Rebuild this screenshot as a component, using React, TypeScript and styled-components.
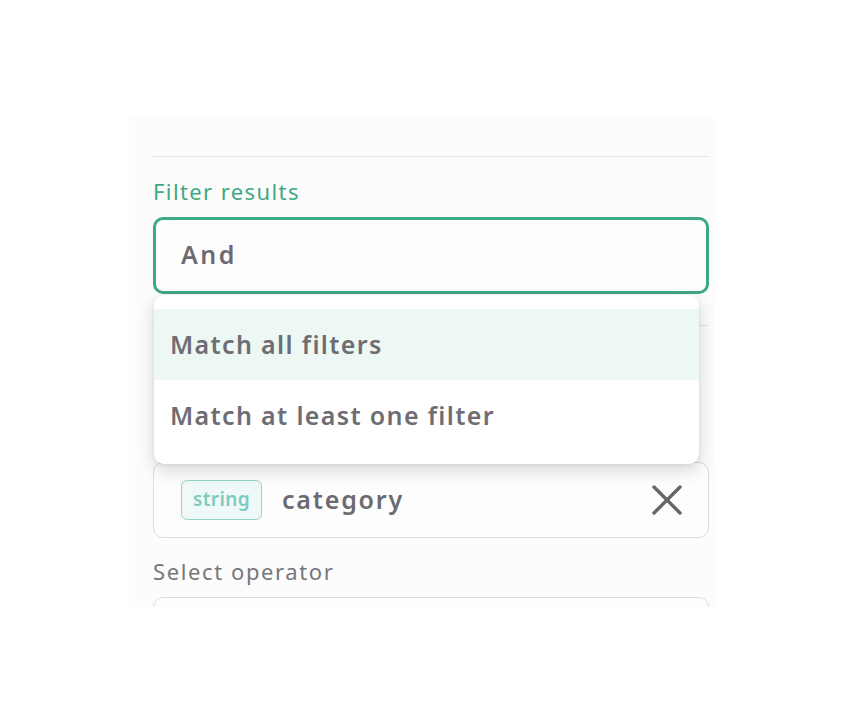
import React from "react";
import styled, { createGlobalStyle } from "styled-components";

const Global = createGlobalStyle`
  html, body { margin: 0; padding: 0; background: #ffffff; }
  body { font-family: "Noto Sans", "Lato", sans-serif; }
  * { box-sizing: border-box; }
`;

const Page = styled.div`
  width: 844px;
  height: 726px;
  padding: 118px 0 0 129px;
`;

const Panel = styled.div`
  position: relative;
  width: 586px;
  height: 489px;
  overflow: hidden;
  background: #fcfcfc;
  padding: 38px 6px 0 24px;
  display: flex;
  flex-direction: column;
`;

const Divider = styled.div<{ $mt?: number }>`
  height: 1px;
  background: #e3e3e3;
  margin-top: ${(p) => p.$mt ?? 0}px;
  flex-shrink: 0;
`;

const Label = styled.div<{ $color: string; $mt: number; $ls: number }>`
  margin-top: ${(p) => p.$mt}px;
  font-size: 22px;
  line-height: 28px;
  letter-spacing: ${(p) => p.$ls}px;
  color: ${(p) => p.$color};
`;

const Spacer = styled.div<{ $h: number }>`
  height: ${(p) => p.$h}px;
  flex-shrink: 0;
`;

const FieldWrap = styled.div`
  position: relative;
  margin-top: 12px;
`;

const ActiveInput = styled.div`
  height: 77px;
  border: 3px solid #3daa82;
  border-radius: 10px;
  background: #fdfdfd;
  display: flex;
  align-items: center;
  padding: 0 0 3px 25px;
  font-size: 25px;
  font-weight: 600;
  letter-spacing: 2.5px;
  color: #6c6b71;
`;

const Menu = styled.div`
  position: absolute;
  z-index: 5;
  left: 1px;
  top: 78px;
  width: 545px;
  background: #ffffff;
  border-radius: 10px;
  padding: 14px 0 13px;
  box-shadow: 0 6px 18px rgba(0, 0, 0, 0.16), 0 1px 4px rgba(0, 0, 0, 0.06);
`;

const MenuItem = styled.div<{ $active?: boolean }>`
  height: 71px;
  display: flex;
  align-items: center;
  padding: 0 0 2px 16px;
  font-size: 25px;
  font-weight: 600;
  letter-spacing: 1.35px;
  color: #6e6d73;
  background: ${(p) => (p.$active ? "#edf8f4" : "transparent")};
`;

const Field = styled.div<{ $mt: number }>`
  margin-top: ${(p) => p.$mt}px;
  height: 76px;
  border: 1px solid #dcdcdc;
  border-radius: 10px;
  background: #fdfdfd;
  display: flex;
  align-items: center;
  padding: 0 26px 0 27px;
  gap: 20px;
  flex-shrink: 0;
`;

const Chip = styled.span`
  height: 40px;
  width: 81px;
  justify-content: center;
  border: 1.5px solid #93d6cd;
  border-radius: 6px;
  background: #eff9f7;
  color: #7ccbc1;
  font-size: 19px;
  font-weight: 600;
  letter-spacing: 0.4px;
  display: flex;
  align-items: center;
  padding-bottom: 2px;
`;

const FieldText = styled.span`
  flex: 1;
  font-size: 25px;
  font-weight: 600;
  letter-spacing: 1.8px;
  color: #6c6b71;
  padding-bottom: 3px;
`;

const Close = styled.svg`
  width: 30px;
  height: 30px;
`;

export default function App() {
  return (
    <>
      <Global />
      <Page>
        <Panel>
          <Divider />
          <Label $color="#3daa82" $mt={20} $ls={1.4}>Filter results</Label>
          <FieldWrap>
            <ActiveInput>And</ActiveInput>
            <Menu>
              <MenuItem $active>Match all filters</MenuItem>
              <MenuItem>Match at least one filter</MenuItem>
            </Menu>
          </FieldWrap>
          <Divider $mt={31} />
          <Spacer $h={136} />
          <Field $mt={0}>
            <Chip>string</Chip>
            <FieldText>category</FieldText>
            <Close viewBox="0 0 30 30">
              <path d="M2 2 L28 28 M28 2 L2 28" stroke="#666569" strokeWidth="3.4" strokeLinecap="round" fill="none" />
            </Close>
          </Field>
          <Label $color="#77767b" $mt={19} $ls={1.6}>Select operator</Label>
          <Field $mt={12} />
        </Panel>
      </Page>
    </>
  );
}
